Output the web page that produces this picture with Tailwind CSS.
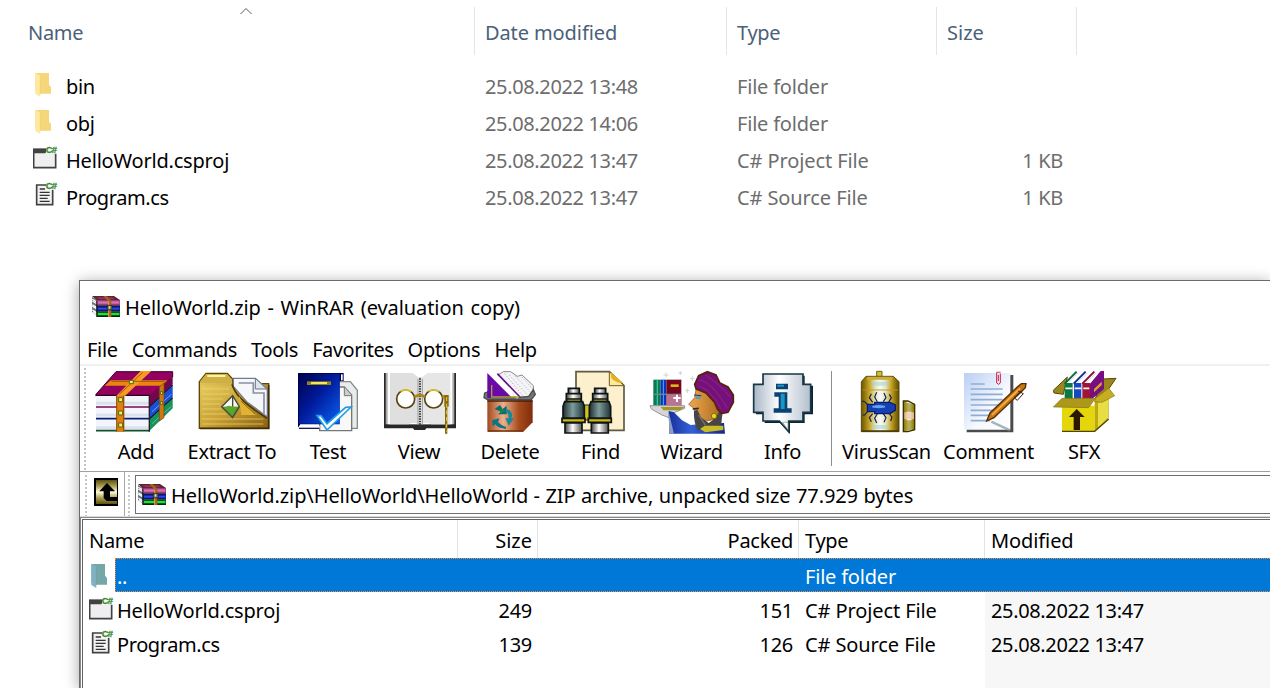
<!DOCTYPE html>
<html lang="en">
<head>
<meta charset="utf-8">
<title>HelloWorld.zip - WinRAR</title>
<script src="https://cdn.jsdelivr.net/npm/@tailwindcss/browser@4"></script>
</head>
<body class="w-[1270px] h-[688px] overflow-hidden bg-white text-black font-['Noto_Sans','Open_Sans',sans-serif] text-[20px] leading-[30px] tracking-[-0.3px] whitespace-nowrap">

<svg class="absolute h-0 w-0">
  <defs>
    <linearGradient id="gold" x1="0" y1="0" x2="1" y2="1"><stop offset="0" stop-color="#e3cb5c"/><stop offset=".5" stop-color="#c9a238"/><stop offset="1" stop-color="#8a6210"/></linearGradient>
    <linearGradient id="blue" x1="0" y1="0" x2="1" y2="1"><stop offset="0" stop-color="#00004e"/><stop offset=".45" stop-color="#001a9a"/><stop offset="1" stop-color="#0a62f5"/></linearGradient>
    <linearGradient id="silver" x1="0" y1="0" x2="1" y2="0"><stop offset="0" stop-color="#a9b6c6"/><stop offset=".45" stop-color="#ffffff"/><stop offset="1" stop-color="#b3bfce"/></linearGradient>
    <linearGradient id="page" x1="0" y1="0" x2="1" y2="1"><stop offset="0" stop-color="#b9cff2"/><stop offset=".6" stop-color="#f6f9ff"/><stop offset="1" stop-color="#ffffff"/></linearGradient>
    <linearGradient id="copper" x1="0" y1="0" x2="1" y2="0"><stop offset="0" stop-color="#a04a20"/><stop offset=".35" stop-color="#eeb08c"/><stop offset=".7" stop-color="#a64a1c"/><stop offset="1" stop-color="#7e2e0a"/></linearGradient>
    <linearGradient id="tube" x1="0" y1="0" x2="1" y2="0"><stop offset="0" stop-color="#1d2e30"/><stop offset=".45" stop-color="#7f9c9c"/><stop offset="1" stop-color="#1f3234"/></linearGradient>
    <linearGradient id="chrome" x1="0" y1="0" x2="1" y2="0"><stop offset="0" stop-color="#444"/><stop offset=".45" stop-color="#fff"/><stop offset="1" stop-color="#555"/></linearGradient>
    <linearGradient id="can" x1="0" y1="0" x2="1" y2="0"><stop offset="0" stop-color="#6a5400"/><stop offset=".2" stop-color="#c2a020"/><stop offset=".38" stop-color="#e8e6c0"/><stop offset=".5" stop-color="#f8fbf8"/><stop offset=".64" stop-color="#e8e6c0"/><stop offset=".8" stop-color="#c2a020"/><stop offset="1" stop-color="#5d4a00"/></linearGradient>
    <linearGradient id="skin" x1="0" y1="0" x2="1" y2="0"><stop offset="0" stop-color="#f0a850"/><stop offset="1" stop-color="#a5661a"/></linearGradient>
    <linearGradient id="robe" x1="0" y1="0" x2="1" y2="0"><stop offset="0" stop-color="#16309c"/><stop offset=".4" stop-color="#3560d6"/><stop offset="1" stop-color="#12298a"/></linearGradient>
    <linearGradient id="olive" x1="0" y1="0" x2="0" y2="1"><stop offset="0" stop-color="#5c5210"/><stop offset=".25" stop-color="#a99b52"/><stop offset=".5" stop-color="#fffbe0"/><stop offset=".75" stop-color="#a99b52"/><stop offset="1" stop-color="#5c5210"/></linearGradient>
    <symbol id="folder" viewBox="0 0 48 72"><path d="M1 0H42V35L48 42V62H12V58L1 56Z" fill="#f5d67a"/><path d="M1 0L16 8V72L1 63Z" fill="#ffe8a0"/><path d="M16 10V62" stroke="#efcb63" stroke-width="2"/></symbol>
    <symbol id="folder-sel" viewBox="0 0 48 72"><path d="M1 0H42V35L48 42V62H12V58L1 56Z" fill="#76a7a8"/><path d="M1 0L16 8V72L1 63Z" fill="#7fb3c4"/><path d="M16 10V62" stroke="#6b9da3" stroke-width="2"/></symbol>
    <symbol id="csproj" viewBox="0 0 78 72"><path d="M2 13H68V68H2Z" fill="#efeff2" stroke="#424242" stroke-width="5"/><path d="M0 11H44L38 25H0Z" fill="#424242"/><path d="M42 0H78V26H38Z" fill="#fff"/><text x="38" y="23" font-family="Liberation Sans" font-size="28" font-weight="bold" letter-spacing="-2" fill="#388a34" stroke="#388a34" stroke-width="1">C#</text></symbol>
    <symbol id="cs" viewBox="0 0 78 72"><path d="M11 9H59V68H11Z" fill="#f3f3f5" stroke="#424242" stroke-width="5"/><path d="M20 21H36M20 31H50M20 40H50M20 49H44M20 58H50" stroke="#333" stroke-width="4"/><path d="M40 0H78V24H40Z" fill="#fff"/><text x="38" y="21" font-family="Liberation Sans" font-size="28" font-weight="bold" letter-spacing="-2" fill="#388a34" stroke="#388a34" stroke-width="1">C#</text></symbol>
    <symbol id="rar" viewBox="0 0 84 63">
      <path d="M0 3L18 12V61L0 48Z" fill="#6c7680"/><path d="M1 10L16 19M1 15L16 24M1 26L16 35M1 31L16 40M1 42L16 51M3 47L16 56" stroke="#fff" stroke-width="3.500"/>
      <path d="M0 0H66L84 12H14Z" fill="#5c2230"/><path d="M12 4H60L70 10H22Z" fill="#8a3a52"/>
      <path d="M14 12H84V28H14Z" fill="#9c3a7c"/><path d="M18 16H82V23H18Z" fill="#d873b6"/>
      <path d="M14 30H84V46H14Z" fill="#0b1c7e"/><path d="M18 35H82V41H18Z" fill="#2849f0"/>
      <path d="M14 48H84V63H14Z" fill="#085a12"/><path d="M18 51H82V57H18Z" fill="#20e03c"/>
      <path d="M14 14V62M14 29H84M14 46H84M14 62H84" stroke="#101010" stroke-width="2.500"/>
      <path d="M34 0H44L58 14V63H48V16Z" fill="#a6611c"/><path d="M50 16V62" stroke="#e3a54d" stroke-width="3"/>
      <path d="M46 28H60V42H46Z" fill="#6d6654" stroke="#222" stroke-width="2"/><path d="M50 31H55V38H50Z" fill="#e8e2c0"/>
    </symbol>
  </defs>
</svg>

<div class="flex h-full flex-col">
  <!-- Explorer file list -->
  <section class="flex h-[280px] shrink-0 flex-col text-[#6d6d6d]">
    <div class="grid h-[55px] grid-cols-[475px_252px_210px_140px] pt-[7px] text-[#4c607a]">
      <div class="flex items-center border-r border-[#e5e5e5] pl-[28px] pt-[4px]">Name
        <svg class="-mt-[4px] ml-[157px] h-[8px] w-[12px] self-start" viewBox="0 0 12 8"><path d="M.5 7L6 1.500L11.500 7" fill="none" stroke="#5a5a5a"/></svg>
      </div>
      <div class="flex items-center border-r border-[#e5e5e5] pl-[10px] pt-[4px] tracking-[-0.1px]">Date modified</div>
      <div class="flex items-center border-r border-[#e5e5e5] pl-[10px] pt-[4px]">Type</div>
      <div class="flex items-center border-r border-[#e5e5e5] pl-[10px] pt-[4px] tracking-normal">Size</div>
    </div>
    <div class="grid auto-rows-[37px] grid-cols-[66px_419px_252px_210px_116px] items-center pt-[13px]">
      <svg class="ml-[35px] h-6 w-4 self-start mt-[5px]"><use href="#folder"/></svg><span class="text-black">bin</span><span class="tracking-[-0.36px]">25.08.2022 13:48</span><span class="tracking-[-0.2px]">File folder</span><span></span>
      <svg class="ml-[35px] h-6 w-4 self-start mt-[5px]"><use href="#folder"/></svg><span class="text-black">obj</span><span class="tracking-[-0.36px]">25.08.2022 14:06</span><span class="tracking-[-0.2px]">File folder</span><span></span>
      <svg class="ml-[33px] h-6 w-[26px] self-start mt-[3px]"><use href="#csproj"/></svg><span class="text-black tracking-[-0.2px]">HelloWorld.csproj</span><span class="tracking-[-0.36px]">25.08.2022 13:47</span><span class="tracking-[-0.1px]">C# Project File</span><span class="text-right">1 KB</span>
      <svg class="ml-[33px] h-6 w-[26px] self-start mt-[3px]"><use href="#cs"/></svg><span class="text-black tracking-[-0.4px]">Program.cs</span><span class="tracking-[-0.36px]">25.08.2022 13:47</span><span class="tracking-[-0.1px]">C# Source File</span><span class="text-right">1 KB</span>
    </div>
  </section>

  <!-- Archive window -->
  <section class="ml-[79px] flex min-h-0 flex-1 flex-col border-l border-t border-[#6b6b6b] bg-white shadow-[0_2px_14px_rgba(0,0,0,0.35)]">
    <div class="flex h-[51px] shrink-0 items-center gap-[5px] pl-[12px] pt-[3px]"><svg class="-mt-[3px] h-[21px] w-7"><use href="#rar"/></svg><span class="tracking-[-0.07px] [word-spacing:1.600px]">HelloWorld.zip - WinRAR (evaluation copy)</span></div>
    <div class="flex h-[34px] shrink-0 items-center gap-[14px] border-b-2 border-[#f0f0f0] pl-[7px] pt-[3px]"><span>File</span><span>Commands</span><span>Tools</span><span class="tracking-[-0.45px]">Favorites</span><span class="tracking-[-0.2px]">Options</span><span>Help</span></div>

    <div class="flex h-[106px] shrink-0 border-b border-[#a0a0a0] text-center">
      <div class="ml-[4px] mt-[2px] mr-[2px] w-[2px] bg-[repeating-linear-gradient(#c4c4c4_0_2px,transparent_2px_4px)]"></div>
      <div class="flex w-24 flex-col items-center pt-[4px]">
        <svg class="h-16 w-[90px] shrink-0" viewBox="91 370 90 64"><g transform="translate(80 365) scale(.33333)">
          <path d="M48 88L108 20H278V36L208 94H48Z" fill="#94005e" stroke="#3d0028" stroke-width="3"/>
          <path d="M208 92L278 36V58L208 125Z" fill="#75054c"/><path d="M208 128L278 62V96L208 162Z" fill="#1a50d8"/><path d="M208 164L278 100V130L208 198Z" fill="#169450"/>
          <path d="M208 126L278 60M208 162L278 98" stroke="#061338" stroke-width="4"/>
          <path d="M216 140L274 88M216 176L274 124" stroke="#63a5ff" stroke-width="3"/>
          <path d="M48 93H208V200H48Z" fill="#f2f5fb"/><path d="M48 115H208M48 150H208M48 188H208" stroke="#dbe2ec" stroke-width="9"/>
          <path d="M48 91H208" stroke="#2c001d" stroke-width="4"/><path d="M48 126H208" stroke="#7e0650" stroke-width="5"/><path d="M48 161H208" stroke="#071f73" stroke-width="5"/><path d="M48 197H208" stroke="#14502d" stroke-width="5"/><path d="M208 92V200" stroke="#222" stroke-width="4"/>
          <path d="M92 46H262L246 62H74Z" fill="#e88612"/><path d="M182 18H214L134 94H108Z" fill="#f69a22"/><path d="M188 22L118 88M94 49H255" stroke="#a45708" stroke-width="3"/>
          <path d="M110 92H133V200H110Z" fill="#de800c"/><path d="M131 92V200M110 92V200" stroke="#8b4a06" stroke-width="3"/>
          <path d="M238 66L252 54V158L238 168Z" fill="#c97812" stroke="#744208" stroke-width="2"/>
          <path d="M116 98H128V110H116ZM116 138H128V150H116ZM116 174H128V186H116ZM148 46H160V56H148ZM241 80H248V88H241ZM241 110H248V118H241Z" fill="#f4ee60" stroke="#51631b" stroke-width="3"/>
        </g></svg><span class="mt-[3px]">Add</span></div>
      <div class="flex w-24 flex-col items-center pt-[4px]">
        <svg class="h-16 w-[90px] shrink-0" viewBox="187 370 90 64"><g transform="translate(80 365) scale(.33333)">
          <path d="M358 190V50L378 25H442L458 42V56H566V190Z" fill="url(#gold)" stroke="#5e4606" stroke-width="4"/>
          <path d="M460 40H526L562 72V156L500 110L460 64Z" fill="#f5f7fb" stroke="#747d8e" stroke-width="4"/><path d="M476 54H520V84H552V148" fill="none" stroke="#8791a3" stroke-width="5"/><path d="M526 40V72H560Z" fill="#dfe5ee" stroke="#69748a" stroke-width="3"/>
          <path d="M360 50L378 28H440L456 44V54H360Z" fill="#cfb044"/><path d="M382 33H436" stroke="#fff0a4" stroke-width="6"/>
          <path d="M362 62H455C462 85 480 108 558 160V188H362Z" fill="url(#gold)"/><path d="M456 58C464 85 485 112 562 160" fill="none" stroke="#4e3905" stroke-width="5"/>
          <path d="M366 72H448M366 87H448M366 102H430M366 117H420M366 132H424M366 147H440M366 162H550M366 177H550" stroke="#f1da73" stroke-width="3" opacity=".7"/>
          <path d="M476 92L488 112L530 150L484 150Z" fill="#e2b235"/><path d="M482 108L526 148" stroke="#8f6412" stroke-width="3"/>
          <path d="M425 125L458 92L478 125Z" fill="#f5f8ee"/><path d="M425 125H478L458 158Z" fill="#559e2b"/><path d="M425 125L458 92L478 125L458 158ZM458 92V125" fill="none" stroke="#43493a" stroke-width="4"/><path d="M432 128L446 122L470 128L456 148Z" fill="#5aa72e"/>
          <path d="M360 190H566V60" fill="none" stroke="#3f2d04" stroke-width="5"/>
        </g></svg><span class="mt-[3px]">Extract To</span></div>
      <div class="flex w-24 flex-col items-center pt-[4px]">
        <svg class="h-16 w-[90px] shrink-0" viewBox="283 370 90 64"><g transform="translate(285 365) scale(.33333)">
          <path d="M160 50H196L217 76V190H150Z" fill="#e7edec" stroke="#8a8a8a" stroke-width="4"/><path d="M110 66H178L200 90V197H104V170Z" fill="#f8f8f8" stroke="#777" stroke-width="4"/><path d="M178 66V92H200" fill="#ccc" stroke="#777" stroke-width="3"/>
          <path d="M39 24H176V48H164V178H46L39 188Z" fill="#00004e"/><path d="M168 28H173V46H168Z" fill="#fff"/><path d="M46 182H104V188H46Z" fill="#fff"/><path d="M42 190H102" stroke="#171c55" stroke-width="4"/>
          <path d="M42 26H164V176H42Z" fill="url(#blue)"/><path d="M66 49H138V60H66Z" fill="#8f8614"/><path d="M78 51H126V57H78Z" fill="#f4e85a"/>
          <path d="M96 152L108 152L126 176L182 127L198 126L126 195Z" fill="#fff" stroke="#209ce4" stroke-width="5"/>
        </g></svg><span class="mt-[3px]">Test</span></div>
      <div class="flex w-[86px] flex-col items-center pt-[4px]">
        <svg class="h-16 w-[90px] shrink-0" viewBox="374 370 90 64"><g transform="translate(285 365) scale(.33333)">
          <path d="M297 24H513V190H424L420 195H388L384 190H297Z" fill="#282828"/><path d="M302 24H508V178H302Z" fill="#aaa"/><path d="M308 24H502V178H308Z" fill="#fff"/>
          <path d="M315 24H382L402 38V178Q385 170 370 178H315Z" fill="#dfdfdf"/><path d="M408 38L428 24H496V178H440Q420 170 408 178Z" fill="#e6e6e6"/><path d="M405 38V190" stroke="#333" stroke-width="6" stroke-dasharray="3 2"/><path d="M399 42V178M412 42V178" stroke="#999" stroke-width="3"/>
          <g fill="#fff" stroke="#5a4310" stroke-width="5"><circle cx="362" cy="102" r="27"/><circle cx="446" cy="102" r="27"/></g>
          <path d="M346 79Q362 70 378 80M430 79Q446 70 462 80" fill="none" stroke="#d8c824" stroke-width="5"/><path d="M388 96Q404 85 420 96M472 94L488 98" fill="none" stroke="#aa8a13" stroke-width="8"/>
          <path d="M478 90H491V125H487V206H480V125H478Z" fill="#8a6a08"/><path d="M485 96V200" stroke="#e8cf38" stroke-width="3" stroke-dasharray="12 8"/>
        </g></svg><span class="mt-[3px]">View</span></div>
      <div class="flex w-24 flex-col items-center pt-[4px]">
        <svg class="h-16 w-[90px] shrink-0" viewBox="465 370 90 64"><g transform="translate(470 365) scale(.33333)">
          <path d="M84 30L100 20H122L142 34L156 30L190 62V88L176 96H136Z" fill="#f4f4f8" stroke="#888" stroke-width="3"/><path d="M118 30L174 92M136 34L184 84M104 26L158 92M156 36L190 74" stroke="#b8b8b8" stroke-width="3" stroke-dasharray="4 5"/>
          <path d="M44 84L54 80V98H146L176 94L190 74L196 88L184 104H52L42 98Z" fill="#747474" stroke="#4d4d4d" stroke-width="4"/>
          <path d="M52 24L126 98H52Z" fill="#6b08aa"/><path d="M84 34L146 96" stroke="#fff" stroke-width="14"/><path d="M82 26L150 96" stroke="#65118b" stroke-width="5"/><path d="M65 60V96H148" fill="none" stroke="#aaa02c" stroke-width="4"/>
          <path d="M52 106H188V172L160 200H52Z" fill="url(#copper)"/><path d="M52 108H188" stroke="#43200d" stroke-width="5"/><path d="M54 198H160" stroke="#70300e" stroke-width="4"/>
          <path d="M74 132L90 120L98 132L110 122V148L84 148L92 140Z" fill="#0b6f72"/><path d="M110 132Q132 140 124 160H132L116 182L106 160H116Q116 146 110 142Z" fill="#15899b"/><path d="M66 166L88 160L84 172Q94 182 108 186V192Q84 190 76 178L68 184Z" fill="#0c7582"/>
          <path d="M88 130L108 136L92 145Z" fill="#0c8a4c"/>
        </g></svg><span class="mt-[3px]">Delete</span></div>
      <div class="flex w-[85px] flex-col items-center pt-[4px]">
        <svg class="h-16 w-[90px] shrink-0" viewBox="556 370 90 64"><g transform="translate(470 365) scale(.33333)">
          <path d="M318 20H418L462 62V196H318Z" fill="#fdf0cc" stroke="#5f5943" stroke-width="5"/><path d="M418 20L462 62H418Z" fill="#fbe9a0" stroke="#6b5b1d" stroke-width="3"/><path d="M422 22L460 54Q440 56 424 40Z" fill="#e4b31b"/>
          <path d="M342 120H360V165H342Z" fill="#d0c21b" stroke="#222" stroke-width="3"/>
          <g id="barrel" stroke="#0d1414" stroke-width="5"><path d="M295 70H328V102H295Z" fill="url(#chrome)"/><path d="M289 86H334V106H289Z" fill="url(#chrome)"/><path d="M290 102H333V110H290Z" fill="#d9bf19"/><path d="M284 110H338L343 124V160H279V124Z" fill="url(#tube)"/><path d="M276 160H345V172H276Z" fill="#d2b90d"/><path d="M285 174H336V204H285Z" fill="url(#chrome)"/></g>
          <use href="#barrel" x="79"/>
        </g></svg><span class="mt-[3px]">Find</span></div>
      <div class="flex w-[97px] flex-col items-center pt-[4px]">
        <svg class="h-16 w-[90px] shrink-0" viewBox="647 370 90 64"><g transform="translate(640 365) scale(.33333)">
          <path d="M40 44H62V122H40Z" fill="#087b52"/><path d="M52 44V122" stroke="#3bc296" stroke-width="4"/><path d="M62 44H79V122H62Z" fill="#0834b7"/><path d="M70 44V122" stroke="#66a4ff" stroke-width="3"/><path d="M79 44H124V122H79Z" fill="#77051b"/><path d="M79 90H124V122H79Z" fill="#bd7290"/><path d="M40 88H124" stroke="#77838d" stroke-width="4"/><path d="M92 62H116" stroke="#d9b61b" stroke-width="8"/><path d="M111 89V111M100 99H122" stroke="#fff" stroke-width="6"/>
          <path d="M30 122H134V130L104 142L92 160L66 150L34 132Z" fill="#d5d5d8" stroke="#95959b" stroke-width="3"/><path d="M62 126H134L120 136H70Z" fill="#a49523"/>
          <path d="M86 138L102 142L126 166L152 180L190 176L252 174L255 206H88Z" fill="url(#robe)"/><path d="M86 140L102 206H88Z" fill="#8c9cc6"/>
          <path d="M170 62L164 98L146 118L162 130L164 146L176 158L200 168L240 160L250 130L226 90L190 66Z" fill="url(#skin)" stroke="#7a4a10" stroke-width="2"/>
          <path d="M162 138L172 134L184 158L206 174L226 160L240 136L248 140L244 176L236 184H196L184 196H172Q160 166 162 138Z" fill="#494545"/><path d="M176 150L196 180" stroke="#777" stroke-width="4"/><path d="M158 132L176 130" stroke="#2a2622" stroke-width="5"/>
          <path d="M162 90L184 92" stroke="#203060" stroke-width="3"/><path d="M168 98H182" stroke="#3ba0dc" stroke-width="7"/>
          <path d="M164 58L176 32L202 20L228 30L240 54L264 66L280 90V112L264 142L244 146L232 132L224 112L198 84L168 72Z" fill="#76107a" stroke="#552306" stroke-width="5"/><path d="M178 44Q220 56 262 130M196 30Q230 50 272 96M176 62Q214 78 244 132" fill="none" stroke="#86207f" stroke-width="4"/>
          <path d="M180 192L194 182H250V195L196 202Z" fill="#c8bd25"/><circle cx="222" cy="153" r="8" fill="#eed31f" stroke="#80700b" stroke-width="3"/>
          <g stroke="#d2d2d2" stroke-width="3"><path d="M78 22V38M70 30H86M121 18V30M115 24H127M157 34V48M150 41H164M142 70V84M135 77H149"/></g>
        </g></svg><span class="mt-[3px]">Wizard</span></div>
      <div class="flex w-[85px] flex-col items-center pt-[4px]">
        <svg class="h-16 w-[90px] shrink-0" viewBox="738 370 90 64"><g transform="translate(640 365) scale(.33333)">
          <path d="M374 32H494V62H519V148H494V174H450V206L420 174H374V148H348V62H374Z" fill="#0c2330"/>
          <path d="M369 27H489V58H512V142H489V168H446V200L418 168H369V142H341V58H369Z" fill="url(#silver)" stroke="#173746" stroke-width="5"/>
          <path d="M428 172L444 194V172Z" fill="#fff" stroke="#888" stroke-width="2"/>
          <path d="M408 56H444V73H408ZM403 82H442V130H455V143H401V130H416V95H403Z" fill="#0a4273"/><path d="M412 59H432V65H412ZM422 86H434V132H422Z" fill="#1b96c4"/>
        </g></svg><span class="mt-[3px]">Info</span></div>
      <div class="my-[5px] ml-[6px] mr-[7px] w-px bg-[#8d8d8d]"></div>
      <div class="flex w-[95px] flex-col items-center pt-[4px]">
        <svg class="h-16 w-[90px] shrink-0" viewBox="842 370 90 64"><g transform="translate(830 365) scale(.33333)">
          <path d="M140 19H156V36H140Z" fill="#d0be35" stroke="#6f6218" stroke-width="3"/><path d="M94 50L108 34H190L207 50V200H94Z" fill="url(#can)" stroke="#5c4808" stroke-width="3"/><path d="M126 56H174M126 186H174" stroke="#9fd0d8" stroke-width="12" opacity=".5"/><path d="M112 40H186" stroke="#c9ae3e" stroke-width="9"/><path d="M98 75H204" stroke="#b79a24" stroke-width="4" opacity=".6"/>
          <path d="M94 198H207" stroke="#453808" stroke-width="5"/>
          <g fill="none" stroke="#0a1e59" stroke-width="3.500"><path d="M114 120L104 110L96 108M114 138L104 150H98M128 112L118 98L124 86M142 110L134 96L140 82M160 110L168 98L162 84M176 112L184 98L178 88M128 146L118 158L124 170M142 146L134 160L140 174M160 146L168 158L162 172M176 144L186 156L182 168"/></g>
          <path d="M112 118H134V112H180L196 120V136L180 146H134V140H112Z" fill="#163fb4" stroke="#0b1d65" stroke-width="4"/><ellipse cx="146" cy="125" rx="20" ry="5" fill="#60a5ef"/>
          <path d="M220 108H234L254 118V194L234 200H220Z" fill="url(#can)" stroke="#393205" stroke-width="4"/><path d="M223 114H236L252 121V140H223ZM223 166H252V190L236 197H223Z" fill="#8f8612" opacity=".65"/><path d="M223 142H252V162H223Z" fill="#f0c9b8" opacity=".8"/>
        </g></svg><span class="mt-[3px]">VirusScan</span></div>
      <div class="flex w-[109px] flex-col items-center pt-[4px]">
        <svg class="h-16 w-[90px] shrink-0" viewBox="944 370 90 64"><g transform="translate(830 365) scale(.33333)">
          <path d="M410 30H550V202H410Z" fill="#4b4b4b"/><path d="M402 24H541V194H402Z" fill="url(#page)"/>
          <path d="M422 57H464M422 72H518M422 88H518M422 104H518M422 120H518M422 136H510M422 151H500M422 167H480" stroke="#91aed2" stroke-width="5"/>
          <path d="M500 22V54Q506 62 511 54V26M505 30V48" fill="none" stroke="#d31940" stroke-width="3"/><path d="M499 22H512" stroke="#e8688a" stroke-width="4"/>
          <path d="M484 170L540 196" stroke="#7c98a6" stroke-width="7" opacity=".7"/>
          <path d="M470 168L480 144L562 66L574 56H588L586 68L574 80L492 158Z" fill="#c67612" stroke="#552c05" stroke-width="4"/><path d="M486 150L570 70" stroke="#f7b24d" stroke-width="5"/><path d="M564 78L580 86L562 106L552 98L574 78" fill="none" stroke="#3c260b" stroke-width="3"/>
        </g></svg><span class="mt-[3px]">Comment</span></div>
      <div class="flex w-[82px] flex-col items-center pt-[4px]">
        <svg class="h-16 w-[90px] shrink-0" viewBox="1039 370 90 64"><g transform="translate(830 365) scale(.33333)">
          <path d="M670 76L712 36L700 88L672 84ZM820 42L858 40L836 72L796 100Z" fill="#9a861b" stroke="#574804" stroke-width="3"/>
          <path d="M704 54L738 20H820L790 54Z" fill="#fff"/>
          <path d="M704 54H728V102H704Z" fill="#0a7a44"/><path d="M704 56L740 20" stroke="#0a6a3a" stroke-width="6"/>
          <path d="M732 54H754V102H732Z" fill="#1747c2"/><path d="M731 56L767 20" stroke="#15308e" stroke-width="6"/>
          <path d="M757 54H780V102H757Z" fill="#a01437"/><path d="M757 56L793 20" stroke="#8a1030" stroke-width="6"/>
          <path d="M780 56L812 18H822V72L786 102H780Z" fill="#790d82"/>
          <path d="M714 54L744 24M742 54L772 24M768 54L798 24" stroke="#ccc" stroke-width="2"/><path d="M706 70H728M734 70H754M760 70H778" stroke="#f5f5f5" stroke-width="5"/><path d="M792 72L815 50V60L792 82Z" fill="#d8a91c"/>
          <path d="M696 122H794V200H696Z" fill="#e5d60b"/><path d="M794 102L836 70V160L794 200Z" fill="#bdab08"/><path d="M804 115L834 90V158L804 188Z" fill="#e8dd42"/>
          <path d="M670 126L696 100H796L776 128Z" fill="#ad981b" stroke="#8a761a" stroke-width="2"/><path d="M796 100L836 70L854 92L816 112L794 110Z" fill="#c7ad22" stroke="#8a761a" stroke-width="2"/>
          <path d="M696 199H794L836 162" fill="none" stroke="#514305" stroke-width="4"/><path d="M740 132L764 156H750V195H731V156H717Z" fill="#2b1700"/>
        </g></svg><span class="mt-[3px]">SFX</span></div>
    </div>

    <div class="flex h-[45px] shrink-0 border-b border-[#dadada]">
      <div class="ml-[5px] mt-[3px] w-[2px] bg-[repeating-linear-gradient(#c4c4c4_0_2px,transparent_2px_4px)]"></div>
      <div class="flex w-[38px] justify-center border-r border-[#a8a8a8] pt-[6px]">
        <svg class="h-7 w-6" viewBox="0 0 72 84"><path d="M0 0H72V84H0Z" fill="#000"/><path d="M6 6H69V78H6Z" fill="url(#olive)"/><path d="M39 15L63 40H48V57H70V69H38L29 60V40H16Z" fill="#000"/></svg>
      </div>
      <div class="ml-[3px] mr-[5px] mt-[3px] w-[2px] bg-[repeating-linear-gradient(#c4c4c4_0_2px,transparent_2px_4px)]"></div>
      <div class="mb-[2px] mt-[3px] flex flex-1 items-center gap-[5px] border-y border-l border-[#6f6f6f] pl-[2px]"><svg class="h-[21px] w-7"><use href="#rar"/></svg><span class="pt-[3px] tracking-[-0.1px] [word-spacing:0.400px]">HelloWorld.zip\HelloWorld\HelloWorld - ZIP archive, unpacked size 77.929 bytes</span></div>
    </div>

    <div class="flex min-h-0 flex-1 border-l border-t border-[#85878c] pl-px pt-px">
      <div class="flex flex-1 flex-col border-l border-t border-[#646464]">
        <div class="grid h-[38px] shrink-0 grid-cols-[375px_80px_261px_186px_285px]">
          <div class="flex items-center border-r border-[#e3e3e3] pl-[6px] pt-[3px]">Name</div>
          <div class="flex items-center justify-end border-r border-[#e3e3e3] pr-[5px] pt-[3px] tracking-normal">Size</div>
          <div class="flex items-center justify-end border-r border-[#e3e3e3] pr-[5px] pt-[3px]">Packed</div>
          <div class="flex items-center border-r border-[#e3e3e3] pl-[6px] pt-[3px]">Type</div>
          <div class="flex items-center pl-[6px] pt-[3px] tracking-[-0.1px]">Modified</div>
        </div>
        <div class="flex h-[34px] shrink-0">
          <svg class="ml-[8px] mr-[8px] mt-[6px] h-6 w-4"><use href="#folder-sel"/></svg>
          <div class="flex flex-1 items-center border-y border-l border-dotted border-[#ff8728] bg-[#0078d7] pt-[3px] text-white"><span class="w-[689px] pl-px">..</span><span class="tracking-[-0.2px]">File folder</span></div>
        </div>
        <div class="grid h-[34px] shrink-0 grid-cols-[34px_415px_261px_192px_285px]">
          <svg class="ml-[6px] mt-[4px] h-6 w-[26px]"><use href="#csproj"/></svg><span class="flex items-center justify-between pt-[4px]"><span class="tracking-[-0.2px]">HelloWorld.csproj</span><span>249</span></span><span class="pt-[4px] text-right">151</span><span class="pl-[12px] pt-[4px] tracking-[-0.1px]">C# Project File</span><span class="bg-[#f7f7f7] pl-[6px] pt-[4px] tracking-[-0.36px]">25.08.2022 13:47</span>
        </div>
        <div class="grid h-[34px] shrink-0 grid-cols-[34px_415px_261px_192px_285px]">
          <svg class="ml-[6px] mt-[4px] h-6 w-[26px]"><use href="#cs"/></svg><span class="flex items-center justify-between pt-[4px]"><span class="tracking-[-0.4px]">Program.cs</span><span>139</span></span><span class="pt-[4px] text-right">126</span><span class="pl-[12px] pt-[4px] tracking-[-0.1px]">C# Source File</span><span class="bg-[#f7f7f7] pl-[6px] pt-[4px] tracking-[-0.36px]">25.08.2022 13:47</span>
        </div>
        <div class="ml-[902px] flex-1 bg-[#f7f7f7]"></div>
      </div>
    </div>
  </section>
</div>
</body>
</html>
